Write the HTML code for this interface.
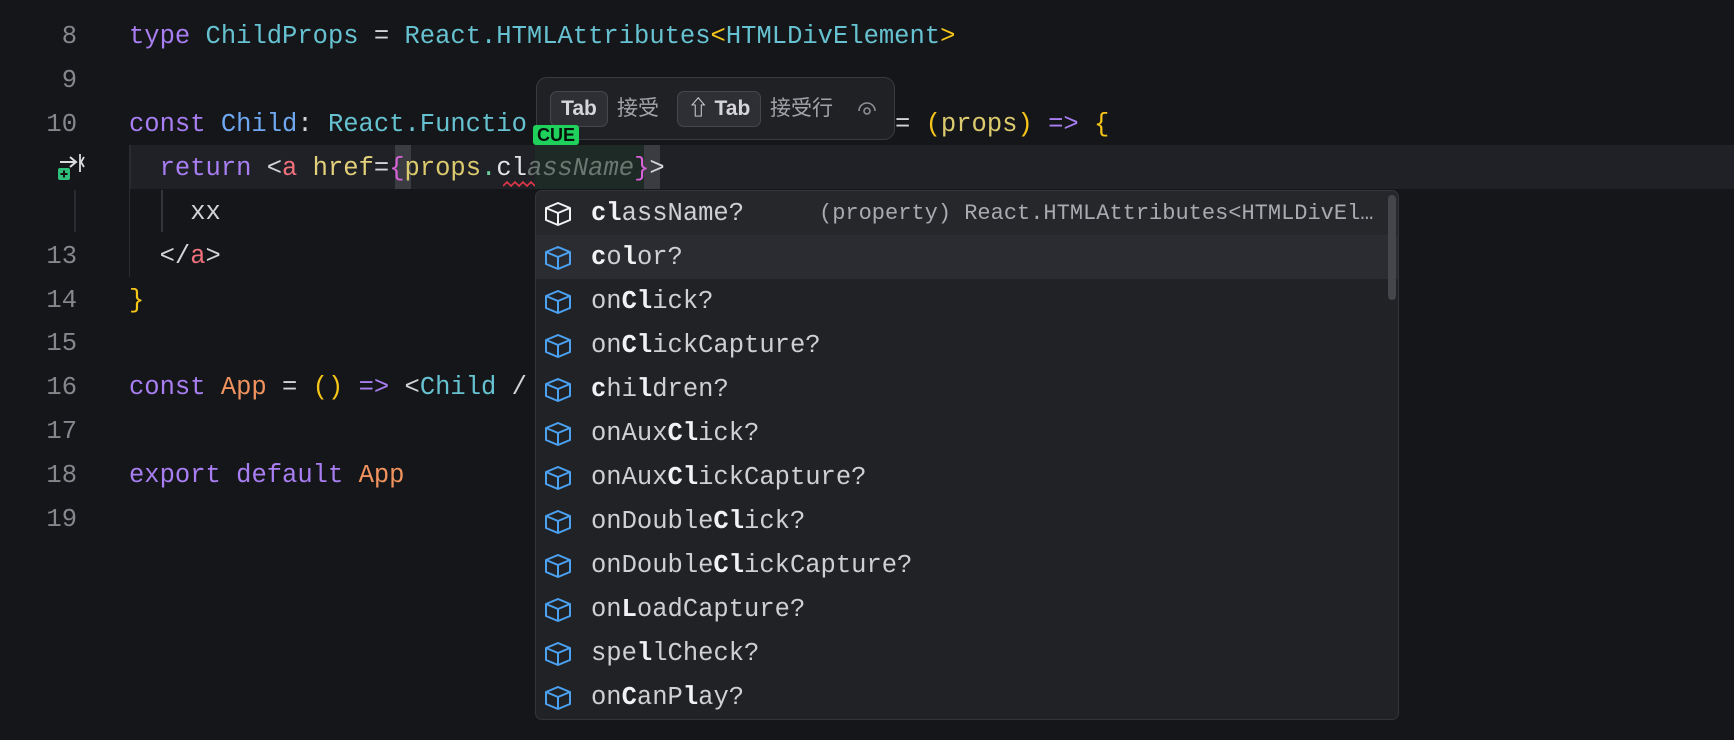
<!DOCTYPE html>
<html><head><meta charset="utf-8"><style>
*{margin:0;padding:0;box-sizing:border-box}
body{width:1734px;height:740px;background:#151619;overflow:hidden;position:relative;font-family:"Liberation Mono",monospace;font-size:25.5px;}
.ln{position:absolute;left:0;width:77px;text-align:right;color:#86878d;height:44px;line-height:48px}
.cl{position:absolute;left:129px;height:44px;line-height:48px;white-space:pre;color:#d4d4d8}
.k{color:#a87ef2}.t{color:#66c2d0}.b{color:#6fa8f0}.o{color:#f0935e}.y{color:#f5c518}.r{color:#f0707c}.h{color:#e2d07a}.m{color:#d862d8}.p{color:#dccb6e}.g{color:#6ad09a}.w{color:#e4e4e8}
.pop{position:absolute;left:535px;top:190px;width:864px;height:530px;background:#212226;border:1px solid #34353a;border-radius:7px;overflow:hidden}
.row{position:absolute;left:0;width:862px;height:44px;line-height:46px;white-space:pre;color:#cfd0d4}
.row b{color:#f2f2f4}
.row svg{position:absolute;left:7px;top:10px}
.row .lb{position:absolute;left:55px}
.hint{position:absolute;left:536px;top:77px;width:359px;height:63px;background:#202125;border:1.5px solid #3a3b40;border-radius:11px;font-family:"Liberation Sans","Noto Sans CJK SC",sans-serif}
.key{position:absolute;top:13px;height:36px;background:#2e2f34;border:1.5px solid #46474c;border-radius:7px;color:#d6d6da;font-size:21px;font-weight:bold;line-height:33px;text-align:center}
.cj{position:absolute;top:13px;line-height:36px;color:#a3a4a9;font-size:21px}
</style></head><body>
<div style="position:absolute;left:129px;top:145px;width:1605px;height:44px;background:#202126;border-left:2px solid #2a2b30"></div>
<div style="position:absolute;left:395px;top:145px;width:16px;height:44px;background:#3a3c42"></div>
<div style="position:absolute;left:535px;top:145px;width:109px;height:44px;background:#1d2a25"></div>
<div style="position:absolute;left:644px;top:145px;width:16px;height:44px;background:#3a3c42"></div>
<div style="position:absolute;left:129px;top:189px;width:1px;height:88px;background:#2a2b30"></div>
<div style="position:absolute;left:161px;top:190px;width:2px;height:42px;background:#34353a"></div>
<div style="position:absolute;left:74px;top:190px;width:2px;height:42px;background:#2a2b30"></div>

<div class="ln" style="top:13px">8</div>
<div class="ln" style="top:57px">9</div>
<div class="ln" style="top:101px">10</div>
<div class="ln" style="top:233px">13</div>
<div class="ln" style="top:277px">14</div>
<div class="ln" style="top:320px">15</div>
<div class="ln" style="top:364px">16</div>
<div class="ln" style="top:408px">17</div>
<div class="ln" style="top:452px">18</div>
<div class="ln" style="top:496px">19</div>

<svg style="position:absolute;left:57px;top:153px" width="32" height="30" viewBox="0 0 32 30"><path d="M3 9h15M13 4l6 5-6 5" stroke="#dcdce0" stroke-width="2" fill="none"/><path d="M23 1v18M27 4l-3 5 3 5" stroke="#dcdce0" stroke-width="1.8" fill="none"/><rect x="1" y="15" width="12" height="12" rx="2" fill="#2fbf7a"/><path d="M7 17.5v7M3.5 21h7" stroke="#111" stroke-width="2"/></svg>

<div class="cl" style="top:13px"><span class="k">type</span> <span class="t">ChildProps</span> = <span class="t">React.HTMLAttributes</span><span class="y">&lt;</span><span class="t">HTMLDivElement</span><span class="y">&gt;</span></div>
<div class="cl" style="top:101px"><span class="k">const</span> <span class="b">Child</span>: <span class="t">React.Functio</span></div>
<div class="cl" style="top:101px;left:895px">= <span class="y">(</span><span class="p">props</span><span class="y">)</span> <span class="k">=&gt;</span> <span class="y">{</span></div>
<div class="cl" style="top:145px">  <span class="k">return</span> &lt;<span class="r">a</span> <span class="h">href</span>=<span class="m">{</span><span class="p">props</span><span class="g">.</span><span class="w">cl</span><span style="color:#6b7872;font-style:italic">assName</span><span class="m">}</span>&gt;</div>
<svg style="position:absolute;left:503px;top:180px" width="32" height="8"><polyline points="0,6 4,2 8,6 12,2 16,6 20,2 24,6 28,2 32,6" stroke="#e0394a" stroke-width="1.6" fill="none"/></svg>
<div class="cl" style="top:189px">    xx</div>
<div class="cl" style="top:233px">  &lt;/<span class="r">a</span>&gt;</div>
<div class="cl" style="top:277px"><span class="y">}</span></div>
<div class="cl" style="top:364px"><span class="k">const</span> <span class="o">App</span> = <span class="y">()</span> <span class="k">=&gt;</span> &lt;<span class="t">Child</span> /</div>
<div class="cl" style="top:452px"><span class="k">export</span> <span class="k">default</span> <span class="o">App</span></div>

<div class="hint">
<div class="key" style="left:13px;width:58px">Tab</div>
<div class="cj" style="left:80px">接受</div>
<div class="key" style="left:140px;width:84px">⇧ Tab</div>
<div class="cj" style="left:233px">接受行</div>
<svg style="position:absolute;left:320px;top:22px" width="20" height="18" viewBox="0 0 20 18"><path d="M2 11a8 8 0 0 1 16 0" stroke="#8e8f94" stroke-width="1.6" fill="none"/><circle cx="10" cy="11" r="3" stroke="#8e8f94" stroke-width="1.6" fill="none"/></svg>
</div>
<div style="position:absolute;left:533px;top:125px;width:46px;height:20px;background:#1fd15c;border-radius:3px;color:#06110a;font-family:'Liberation Sans',sans-serif;font-weight:bold;font-size:18px;line-height:20px;text-align:center">CUE</div>

<div class="pop">
<div style="position:absolute;left:0;top:0;width:862px;height:44px;background:#26272b"></div>
<div style="position:absolute;left:0;top:44px;width:862px;height:44px;background:#2b2c31"></div>
<div style="position:absolute;left:852px;top:4px;width:8px;height:105px;background:#45464b;border-radius:4px"></div>
<div class="row" style="top:0"><svg width="30" height="26" viewBox="0 0 30 26"><path d="M15 2L27 7v12l-12 5L3 19V7z M3 7l12 5 12-5 M15 12v12" stroke="#f2f2f2" stroke-width="2" fill="none" stroke-linejoin="round"/></svg><span class="lb"><b>cl</b>assName?</span><span style="position:absolute;left:283px;font-size:22px;color:#a9aab0">(property) React.HTMLAttributes&lt;HTMLDivEl…</span></div>
<div class="row" style="top:44px"><svg width="30" height="26" viewBox="0 0 30 26"><path d="M15 2L27 7v12l-12 5L3 19V7z M3 7l12 5 12-5 M15 12v12" stroke="#4ba2f2" stroke-width="2" fill="none" stroke-linejoin="round"/></svg><span class="lb"><b>c</b>o<b>l</b>or?</span></div>
<div class="row" style="top:88px"><svg width="30" height="26" viewBox="0 0 30 26"><path d="M15 2L27 7v12l-12 5L3 19V7z M3 7l12 5 12-5 M15 12v12" stroke="#4ba2f2" stroke-width="2" fill="none" stroke-linejoin="round"/></svg><span class="lb">on<b>Cl</b>ick?</span></div>
<div class="row" style="top:132px"><svg width="30" height="26" viewBox="0 0 30 26"><path d="M15 2L27 7v12l-12 5L3 19V7z M3 7l12 5 12-5 M15 12v12" stroke="#4ba2f2" stroke-width="2" fill="none" stroke-linejoin="round"/></svg><span class="lb">on<b>Cl</b>ickCapture?</span></div>
<div class="row" style="top:176px"><svg width="30" height="26" viewBox="0 0 30 26"><path d="M15 2L27 7v12l-12 5L3 19V7z M3 7l12 5 12-5 M15 12v12" stroke="#4ba2f2" stroke-width="2" fill="none" stroke-linejoin="round"/></svg><span class="lb"><b>c</b>hi<b>l</b>dren?</span></div>
<div class="row" style="top:220px"><svg width="30" height="26" viewBox="0 0 30 26"><path d="M15 2L27 7v12l-12 5L3 19V7z M3 7l12 5 12-5 M15 12v12" stroke="#4ba2f2" stroke-width="2" fill="none" stroke-linejoin="round"/></svg><span class="lb">onAux<b>Cl</b>ick?</span></div>
<div class="row" style="top:264px"><svg width="30" height="26" viewBox="0 0 30 26"><path d="M15 2L27 7v12l-12 5L3 19V7z M3 7l12 5 12-5 M15 12v12" stroke="#4ba2f2" stroke-width="2" fill="none" stroke-linejoin="round"/></svg><span class="lb">onAux<b>Cl</b>ickCapture?</span></div>
<div class="row" style="top:308px"><svg width="30" height="26" viewBox="0 0 30 26"><path d="M15 2L27 7v12l-12 5L3 19V7z M3 7l12 5 12-5 M15 12v12" stroke="#4ba2f2" stroke-width="2" fill="none" stroke-linejoin="round"/></svg><span class="lb">onDouble<b>Cl</b>ick?</span></div>
<div class="row" style="top:352px"><svg width="30" height="26" viewBox="0 0 30 26"><path d="M15 2L27 7v12l-12 5L3 19V7z M3 7l12 5 12-5 M15 12v12" stroke="#4ba2f2" stroke-width="2" fill="none" stroke-linejoin="round"/></svg><span class="lb">onDouble<b>Cl</b>ickCapture?</span></div>
<div class="row" style="top:396px"><svg width="30" height="26" viewBox="0 0 30 26"><path d="M15 2L27 7v12l-12 5L3 19V7z M3 7l12 5 12-5 M15 12v12" stroke="#4ba2f2" stroke-width="2" fill="none" stroke-linejoin="round"/></svg><span class="lb">on<b>L</b>oadCapture?</span></div>
<div class="row" style="top:440px"><svg width="30" height="26" viewBox="0 0 30 26"><path d="M15 2L27 7v12l-12 5L3 19V7z M3 7l12 5 12-5 M15 12v12" stroke="#4ba2f2" stroke-width="2" fill="none" stroke-linejoin="round"/></svg><span class="lb">spe<b>l</b>lCheck?</span></div>
<div class="row" style="top:484px"><svg width="30" height="26" viewBox="0 0 30 26"><path d="M15 2L27 7v12l-12 5L3 19V7z M3 7l12 5 12-5 M15 12v12" stroke="#4ba2f2" stroke-width="2" fill="none" stroke-linejoin="round"/></svg><span class="lb">on<b>C</b>anP<b>l</b>ay?</span></div>
</div>
</body></html>
